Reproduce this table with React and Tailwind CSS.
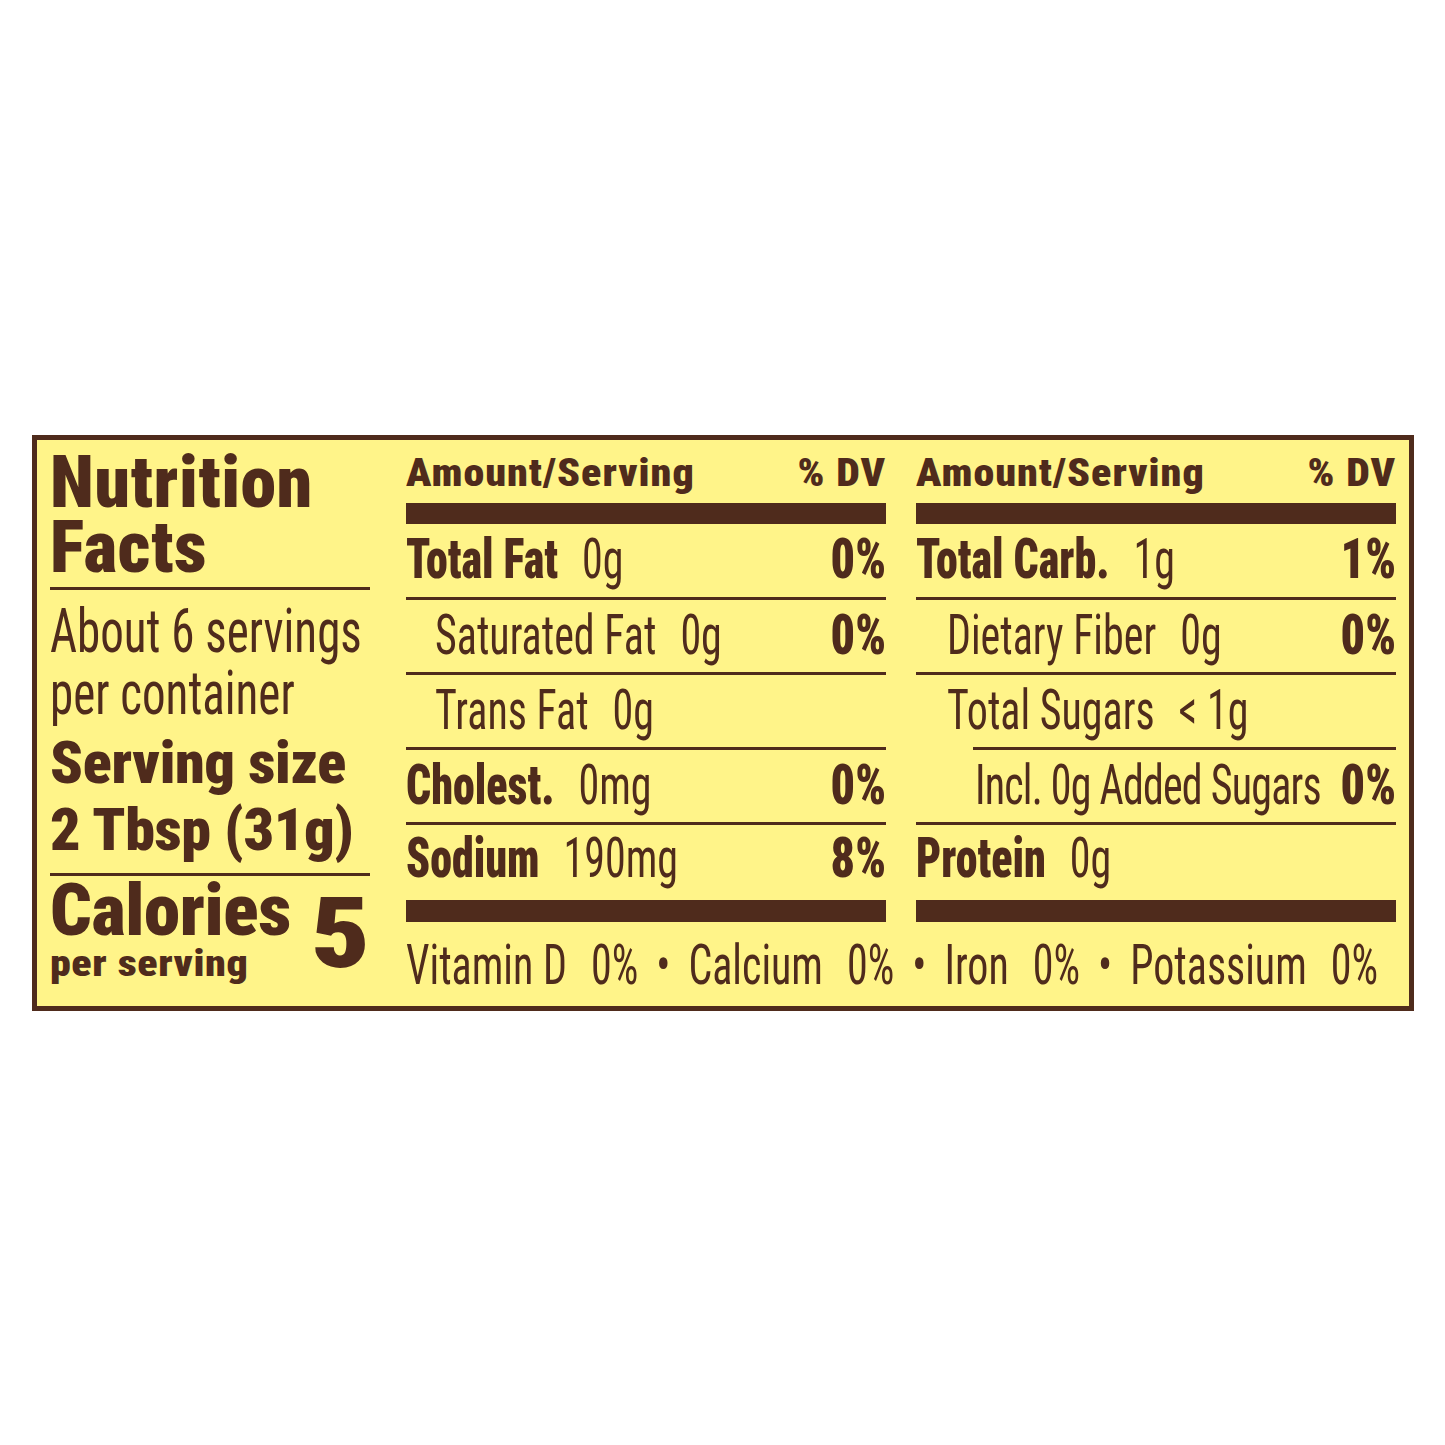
const Rule = ({ className = "" }) => <div className={"h-[3px] bg-[#4f2b1c] " + className} />;
const Bar = ({ className = "" }) => <div className={"bg-[#4f2b1c] " + className} />;

// condensed look: smaller font size stretched vertically
const REG = "inline-block whitespace-nowrap text-[42px] leading-none font-normal scale-y-[1.33]";
const BOLD = "inline-block whitespace-nowrap text-[44px] leading-none font-black scale-y-[1.27]";
const DV = "inline-block whitespace-nowrap text-[48px] leading-none font-black scale-y-[1.17]";

function Row({ label, value, dv, indent = "", bold = true, tight = false, h = "h-[72px] pb-[3px]" }) {
  return (
    <div className={"flex items-center justify-between " + h + " " + indent}>
      <div className="flex items-center">
        <span className={(bold ? BOLD : REG) + (tight ? " tracking-[-0.8px]" : "")}>{label}</span>
        {value && <span className={REG + " ml-[24px]"}>{value}</span>}
      </div>
      {dv && <span className={DV}>{dv}</span>}
    </div>
  );
}

function Header() {
  return (
    <div className="flex h-[63px] items-center justify-between pt-[2px]">
      <span className="inline-block text-[42px] leading-none font-black tracking-[1px] scale-y-[0.93]">Amount/Serving</span>
      <span className="inline-block text-[42px] leading-none font-black tracking-[1px] scale-y-[0.93]">% DV</span>
    </div>
  );
}

function Vit({ label, value, last }) {
  return (
    <>
      <span className={REG}>{label}</span>
      <span className={REG + " ml-[24px]"}>{value}</span>
      {!last && <span className={REG + " mx-[18px]"}>•</span>}
    </>
  );
}

export default function App() {
  return (
    <div className="min-h-[1445px] bg-white pt-[435px] pl-[32px] font-['Roboto_Condensed','Liberation_Sans',sans-serif] text-[#4f2b1c]">
      <div className="box-border flex h-[576px] w-[1382px] border-[5px] border-[#4f2b1c] bg-[#fff489] pl-[13px] pr-[13px]">
        {/* Left column */}
        <div className="flex w-[320px] flex-col">
          <div className="mt-[10px] text-[72px] font-black leading-[65px] tracking-[0.5px]">
            <div>Nutrition</div>
            <div>Facts</div>
          </div>
          <Rule className="mt-[7px]" />
          <div className="mt-[9px] flex flex-col">
            <div className="flex h-[62px] items-center">
              <span className="inline-block whitespace-nowrap text-[47px] leading-none scale-y-[1.3]">About 6 servings</span>
            </div>
            <div className="flex h-[62px] items-center">
              <span className="inline-block whitespace-nowrap text-[47px] leading-none scale-y-[1.3]">per container</span>
            </div>
          </div>
          <div className="mt-[6px] text-[60px] font-black leading-[67px] tracking-[-0.3px] whitespace-nowrap">
            <div>Serving size</div>
            <div>2 Tbsp (31g)</div>
          </div>
          <Rule className="mt-[10px]" />
          <div className="flex items-start justify-between">
            <div className="flex flex-col">
              <div className="mt-[3px] text-[73px] font-black leading-[62px] tracking-[-0.3px]">Calories</div>
              <div className="mt-[5px] flex h-[36px] items-center">
                <span className="inline-block whitespace-nowrap text-[42px] leading-none font-black tracking-[0.6px] scale-y-[0.88]">per serving</span>
              </div>
            </div>
            <div className="mt-[17px] flex h-[80px] items-center">
              <span className="inline-block text-[115px] leading-none font-black scale-y-[0.86]">5</span>
            </div>
          </div>
        </div>

        {/* Right part */}
        <div className="ml-[36px] flex flex-col">
          <div className="flex gap-[30px]">
            <div className="flex w-[480px] flex-col">
              <Header />
              <Bar className="h-[21px]" />
              <Row label="Total Fat" value="0g" dv="0%" h="h-[73px] pb-[3px]" />
              <Rule />
              <Row label="Saturated Fat" value="0g" dv="0%" bold={false} indent="pl-[29px]" />
              <Rule />
              <Row label="Trans Fat" value="0g" bold={false} indent="pl-[29px]" />
              <Rule />
              <Row label="Cholest." value="0mg" dv="0%" />
              <Rule />
              <Row label="Sodium" value="190mg" dv="8%" h="h-[75px] pb-[9px]" />
              <Bar className="h-[22px]" />
            </div>
            <div className="flex w-[480px] flex-col">
              <Header />
              <Bar className="h-[21px]" />
              <Row label="Total Carb." value="1g" dv="1%" h="h-[73px] pb-[3px]" />
              <Rule />
              <Row label="Dietary Fiber" value="0g" dv="0%" bold={false} indent="pl-[31px]" />
              <Rule />
              <Row label="Total Sugars" value="< 1g" bold={false} indent="pl-[31px]" />
              <Rule className="ml-[57px]" />
              <Row label="Incl. 0g Added Sugars" dv="0%" bold={false} tight indent="pl-[59px]" />
              <Rule />
              <Row label="Protein" value="0g" h="h-[75px] pb-[9px]" />
              <Bar className="h-[22px]" />
            </div>
          </div>
          <div className="mt-[15px] flex h-[56px] items-center">
            <Vit label="Vitamin D" value="0%" />
            <Vit label="Calcium" value="0%" />
            <Vit label="Iron" value="0%" />
            <Vit label="Potassium" value="0%" last />
          </div>
        </div>
      </div>
    </div>
  );
}
